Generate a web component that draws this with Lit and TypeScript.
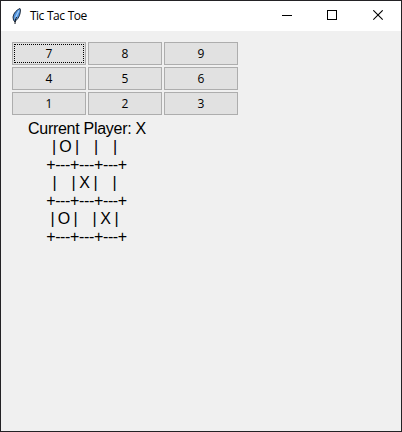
import { LitElement, html, css } from "lit";
import { customElement, property, state } from "lit/decorators.js";

type Mark = "X" | "O" | " ";

@customElement("title-bar")
class TitleBar extends LitElement {
  static styles = css`
    :host {
      display: flex;
      align-items: center;
      height: 30px;
      background: #fff;
      color: #000;
    }
    .feather {
      width: 16px;
      height: 16px;
      margin-left: 7px;
    }
    .title {
      flex: 1;
      margin-left: 6px;
      font: 12px/16px "Open Sans", "Noto Sans", sans-serif;
      letter-spacing: -0.6px;
      word-spacing: 1px;
      white-space: nowrap;
    }
    .controls {
      display: flex;
    }
    .control {
      box-sizing: border-box;
      width: 45px;
      height: 30px;
      padding-left: 17px;
      display: flex;
      align-items: center;
    }
    .control:last-child {
      width: 46px;
      padding-left: 18px;
    }
    .control svg {
      width: 11px;
      height: 11px;
      margin-bottom: 1px;
      fill: none;
      stroke: #000;
    }
  `;

  @property() heading = "";

  render() {
    return html`
      <svg class="feather" viewBox="0 0 16 16">
        <path d="M12 .5 C9 1.500 5.500 5 5 9 L5.500 12 L7 14 L8 12.500 C11 10 12.500 6 12.500 1.500 Z" fill="#4d8fdb" stroke="#17202c" stroke-width=".9" />
        <path d="M11 2.500 C9.500 5.500 8 8 7 11" fill="none" stroke="#9fcbf5" stroke-width="1.300" />
        <path d="M8.500 9 C7.500 11 7 13 7 16" fill="none" stroke="#10151c" stroke-width="1" />
      </svg>
      <span class="title">${this.heading}</span>
      <div class="controls">
        <span class="control"><svg viewBox="0 0 11 11"><path d="M0 5.500H10" shape-rendering="crispEdges" /></svg></span>
        <span class="control"><svg viewBox="0 0 11 11"><rect x=".5" y=".5" width="9" height="9" shape-rendering="crispEdges" /></svg></span>
        <span class="control"><svg viewBox="0 0 11 11"><path d="M.3 .3L9.700 9.700M9.700 .3L.3 9.700" stroke-width="1.100" /></svg></span>
      </div>
    `;
  }
}

@customElement("app-root")
class AppRoot extends LitElement {
  static styles = css`
    :host {
      display: block;
      box-sizing: border-box;
      width: 402px;
      height: 432px;
      border: 1px solid #232225;
      background: #f0f0f0;
      overflow: hidden;
    }
    .keypad {
      display: grid;
      grid-template-columns: repeat(3, 74px);
      grid-auto-rows: 23px;
      gap: 2px;
      margin: 11px 0 0 11px;
    }
    .key {
      box-sizing: border-box;
      padding: 1px;
      border: 1px solid #adadad;
      border-radius: 0;
      background: #e1e1e1;
      color: #000;
      font: 12px/19px "Open Sans", "Noto Sans", sans-serif;
      text-align: center;
    }
    .ring {
      display: block;
      box-sizing: border-box;
      height: 19px;
      border: 1px solid transparent;
      line-height: 17px;
    }
    .key.focused .ring {
      border: 1px dotted #000;
    }
    .board {
      width: 118px;
      margin: 5px 0 0 27px;
      font: 16px/18px "Liberation Sans", Arial, sans-serif;
      color: #000;
    }
    .status,
    .rule {
      text-align: center;
      white-space: nowrap;
    }
    .status {
      letter-spacing: -0.28px;
    }
    .rule {
      letter-spacing: -0.36px;
      padding-right: 1px;
    }
    .row {
      display: flex;
      justify-content: center;
      height: 18px;
      padding-right: 5px;
    }
    .bar {
      width: 4px;
      text-align: center;
    }
    .cell {
      width: 15px;
      text-align: center;
      white-space: pre;
    }
    .cell.o {
      width: 19px;
    }
    .cell.x {
      width: 18px;
    }
  `;

  @state() private player = "X";
  @state() private focused = 7;
  @state() private grid: Mark[][] = [
    ["O", " ", " "],
    [" ", "X", " "],
    ["O", " ", "X"],
  ];

  render() {
    return html`
      <title-bar heading="Tic Tac Toe"></title-bar>
      <div class="keypad">
        ${[7, 8, 9, 4, 5, 6, 1, 2, 3].map(
          (n) => html`<button class="key ${n === this.focused ? "focused" : ""}"><span class="ring">${n}</span></button>`
        )}
      </div>
      <div class="board">
        <div class="status">Current Player: ${this.player}</div>
        ${this.grid.map(
          (row) => html`
            <div class="row">
              <span class="bar">|</span>${row.map(
                (m) => html`<span class="cell ${m.trim().toLowerCase()}">${m}</span><span class="bar">|</span>`
              )}
            </div>
            <div class="rule">+---+---+---+</div>
          `
        )}
      </div>
    `;
  }
}
